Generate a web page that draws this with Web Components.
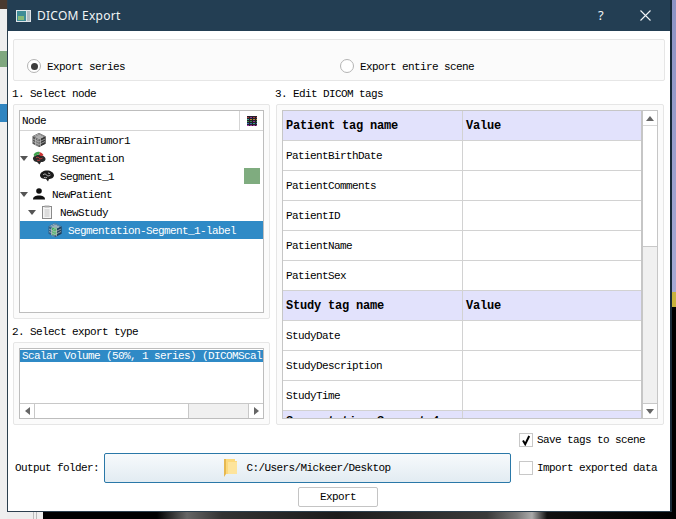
<!DOCTYPE html>
<html>
<head>
<meta charset="utf-8">
<title>DICOM Export</title>
<style>
  html, body { margin: 0; padding: 0; height: 100%; overflow: hidden; background: #000; }
</style>
</head>
<body>
<template id="DesktopBackdropTemplate">
	<style>
		:host { display: block; position: relative; width: 676px; height: 519px; overflow: hidden; background: #000;
			font: 11px "Liberation Mono", "DejaVu Sans Mono", monospace; letter-spacing: -0.6px; color: #000; }
		.left { position: absolute; left: 0; top: 0; width: 7px; height: 519px; background: #efefef; }
		.left i { position: absolute; left: 0; width: 7px; display: block; }
		.right { position: absolute; left: 671px; top: 0; width: 5px; height: 519px;
			background: linear-gradient(#000 0 292px, #c8b23c 292px 307px, #000 307px); }
		.right b { position: absolute; left: 0; top: 0; width: 5px; height: 292px; background: linear-gradient(#8d93c4, #a6a9d4); }
		.bottom { position: absolute; left: 7px; top: 512px; width: 669px; height: 7px;
			background: linear-gradient(90deg, #ededed 0 26px, #bbb 26px 27px, #eee 27px 29px, #bbb 29px 30px, #eee 30px 36px, #000 36px 150px, #444 170px, #666 180px, #333 215px, #1c1c1c 330px, #3a3a3a 480px, #777 510px, #aaa 525px, #111 540px, #000); }
	</style>
	<div class="left">
		<i style="top:0;height:9px;background:#4a3a30"></i>
		<i style="top:51px;height:16px;background:#7fa77f"></i>
		<i style="top:104px;height:18px;background:#2f84c0"></i>
	</div>
	<div class="right"><b></b></div>
	<div class="bottom"></div>
	<slot></slot>
</template>

<template id="DicomWindowTemplate">
	<style>
		:host { display: flex; flex-direction: column; position: absolute; left: 7px; top: 0; width: 662px; height: 511px;
			box-sizing: content-box; border: 1px solid #2c3f4e; border-top: 0; border-right: 2px solid #182a38; background: #fff; }
	</style>
	<slot></slot>
</template>

<template id="TitleBarTemplate">
	<style>
		:host { display: flex; align-items: center; height: 31px; background: #233e53; color: #f2f5f7; flex: none;
			font: 12px "Noto Sans", "Open Sans", sans-serif; letter-spacing: 0.25px; }
		svg { display: block; margin-left: 8px; margin-right: 6px; }
		.text { flex: 1; padding-bottom: 1px; }
		.help { width: 16px; text-align: center; font-size: 13px; margin-right: 31px; padding-bottom: 2px; }
		.close { margin: 0 19px 1px 0; }
	</style>
	<svg width="15" height="12" viewBox="0 0 15 12">
		<rect width="15" height="12" fill="#dfe4e8"/>
		<rect x="1" y="1" width="9" height="10" fill="#3f8c96"/>
		<rect x="2" y="6" width="6" height="4" fill="#86b878"/>
		<rect x="11" y="1" width="3" height="10" fill="#aeb9c0"/>
	</svg>
	<span class="text"><slot></slot></span>
	<span class="help">?</span>
	<svg class="close" width="11" height="11" viewBox="0 0 11 11"><path d="M.5.5l10 10M10.5.5l-10 10" stroke="#f2f5f7" stroke-width="1.1" fill="none"/></svg>
</template>

<template id="GroupBoxTemplate">
	<style>
		:host { display: block; box-sizing: border-box; background: #fbfbfb; border: 1px solid #e6e6e6; border-radius: 2px; padding: 5px; }
	</style>
	<slot></slot>
</template>

<template id="SectionLabelTemplate">
	<style>
		:host { display: flex; align-items: center; height: 23px; flex: none; white-space: pre; margin-left: -1px; padding-top: 2px; box-sizing: border-box; }
	</style>
	<slot></slot>
</template>

<template id="RadioOptionTemplate">
	<style>
		:host { display: flex; align-items: center; gap: 6px; height: 14px; white-space: pre; }
		.ring { box-sizing: border-box; width: 14px; height: 14px; border: 1px solid #b4b4b4; border-radius: 50%; background: #fff; display: flex; align-items: center; justify-content: center; }
		:host([checked]) .ring::after { content: ""; width: 7px; height: 7px; border-radius: 50%; background: #3c3c3c; }
		span.t { padding-top: 1px; }
	</style>
	<span class="ring"></span><span class="t"><slot></slot></span>
</template>

<template id="CheckOptionTemplate">
	<style>
		:host { display: flex; align-items: center; gap: 4px; height: 14px; white-space: pre; }
		.box { box-sizing: border-box; width: 14px; height: 14px; border: 1px solid #c8c8c8; background: #fff; display: block; }
		svg { display: none; }
		:host([checked]) svg { display: block; }
	</style>
	<span class="box"><svg width="12" height="12" viewBox="0 0 12 12"><path d="M3 6.500L5.200 10.200 9.200 2" fill="none" stroke="#000" stroke-width="2"/></svg></span><slot></slot>
</template>

<template id="NodeTreeTemplate">
	<style>
		:host { display: flex; flex-direction: column; box-sizing: border-box; height: 203px; border: 1px solid #bdbdbd; background: #fff; }
		.head { display: flex; height: 20px; flex: none; border-bottom: 1px solid #d5d5d5; box-sizing: border-box; }
		.head span { flex: 1; padding: 4px 0 0 2px; }
		.head div { width: 23px; border-left: 1px solid #d5d5d5; display: flex; align-items: center; justify-content: center; }
	</style>
	<div class="head"><span>Node</span><div>
		<svg width="10" height="10" viewBox="0 0 10 10" shape-rendering="crispEdges">
			<rect width="10" height="10" fill="#23202c"/>
			<path d="M0 1h10v1H0z" fill="#a83a3a"/>
			<path d="M0 3h10v1H0z" fill="#b08a3a"/>
			<path d="M0 5h10v1H0z" fill="#3a8a4a"/>
			<path d="M0 7h10v1H0z" fill="#3a6ab0"/>
			<path d="M0 9h10v1H0z" fill="#9c3a9c"/>
			<path d="M2 0h1v10H2zM5 0h1v10H5zM8 0h1v10H8z" fill="#23202c"/>
			<path d="M3 1h2v1H3zM6 5h2v1H6z" fill="#8c3a9c"/>
			<path d="M0 3h2v1H0zM6 7h2v1H6z" fill="#3aa08a"/>
		</svg>
	</div></div>
	<div><slot></slot></div>
</template>

<template id="TreeRowTemplate">
	<style>
		:host { display: flex; align-items: center; height: 18px; white-space: pre; padding-left: calc(var(--level, 0) * 8px); }
		:host([selected]) { background: #2f8ac6; color: #fff; }
		.arrow { width: 8px; flex: none; display: flex; justify-content: center; margin-right: 4px; }
		.arrow i { display: none; width: 0; height: 0; border-left: 4px solid transparent; border-right: 4px solid transparent; border-top: 5px solid #555; }
		:host([open]) .arrow i { display: block; }
		svg { display: block; flex: none; margin-right: 6px; }
		.text { flex: 1; padding-top: 1px; }
		.color { display: none; width: 16px; height: 16px; background: #7fac7f; margin-right: 3px; }
		:host([swatch]) .color { display: block; }
	</style>
	<span class="arrow"><i></i></span><svg width="14" height="14" viewBox="0 0 14 14"></svg><span class="text"><slot></slot></span><span class="color"></span>
</template>

<template id="ArrowButtonTemplate">
	<style>
		:host { display: flex; align-items: center; justify-content: center; flex: none; box-sizing: border-box; width: 14px; height: 14px; background: #fff; }
		i { width: 0; height: 0; display: block; }
		:host([dir=up]) i { border: 4px solid transparent; border-top: 0; border-bottom: 5px solid #666; }
		:host([dir=down]) i { border: 4px solid transparent; border-bottom: 0; border-top: 5px solid #666; }
		:host([dir=left]) i { border: 4px solid transparent; border-left: 0; border-right: 5px solid #666; }
		:host([dir=right]) i { border: 4px solid transparent; border-right: 0; border-left: 5px solid #666; }
	</style>
	<i></i>
</template>

<template id="ExportListTemplate">
	<style>
		:host { display: flex; flex-direction: column; box-sizing: border-box; height: 71px; border: 1px solid #bdbdbd; background: #fff; }
		.items { flex: 1; overflow: hidden; white-space: pre; }
		.item { background: #2f8ac6; color: #fff; height: 12px; line-height: 12px; margin-top: 1px; padding-left: 2px; overflow: hidden; }
		.bar { display: flex; flex: none; height: 14px; border-top: 1px solid #c8c8c8; box-sizing: content-box; }
		.handle { width: 155px; background: #fff; border-left: 1px solid #c8c8c8; }
		.track { width: 60px; background: #f0f0f0; border-left: 1px solid #c8c8c8; border-right: 1px solid #c8c8c8; }
	</style>
	<div class="items"><div class="item"><slot></slot></div></div>
	<div class="bar"><arrow-button dir="left"></arrow-button><div class="handle"></div><div class="track"></div><arrow-button dir="right"></arrow-button></div>
</template>

<template id="TagTableTemplate">
	<style>
		:host { display: flex; box-sizing: border-box; height: 309px; border: 1px solid #c6c6c6; background: #fff; }
		.rows { flex: 1; overflow: hidden; border-right: 2px solid #c6c6c6; }
		.bar { width: 14px; flex: none; display: flex; flex-direction: column; }
		.bar div:nth-of-type(1) { flex: none; height: 120px; background: #fff; border-top: 1px solid #d8d8d8; }
		.bar div:nth-of-type(2) { flex: 1; background: #f0f0f0; border-top: 1px solid #c8c8c8; border-bottom: 1px solid #c8c8c8; }
	</style>
	<div class="rows"><slot></slot></div>
	<div class="bar"><arrow-button dir="up"></arrow-button><div></div><div></div><arrow-button dir="down"></arrow-button></div>
</template>

<template id="TagRowTemplate">
	<style>
		:host { display: grid; grid-template-columns: 179px 1fr; height: 30px; box-sizing: border-box; border-bottom: 1px solid #d2d2d2; white-space: pre; }
		:host([header]) { background: #e2e2fc; font-weight: bold; font-size: 12px; letter-spacing: -0.2px; }
		:host([cut]) { height: 21px; border-bottom: 0; }
		.c { display: flex; align-items: center; padding-left: 3px; }
		.c + .c { border-left: 1px solid #d2d2d2; padding-left: 3px; }
	</style>
	<div class="c"><slot></slot></div><div class="c"><slot name="value"></slot></div>
</template>

<template id="FolderButtonTemplate">
	<style>
		:host { display: flex; align-items: center; justify-content: center; gap: 8px; box-sizing: border-box; height: 30px; white-space: pre;
			border: 1px solid #2a78a8; border-radius: 2px; background: linear-gradient(#f7fafc, #e2ecf2); }
		svg { display: block; }
	</style>
	<svg width="14" height="20" viewBox="0 0 14 20">
		<path d="M0 1h10v15H2l-2 3z" fill="#e6b850"/>
		<path d="M2 1h9v2h2v13H2z" fill="#fcd97c"/>
		<path d="M4 4h9v12H4z" fill="#fde49c"/>
	</svg>
	<span><slot></slot></span>
</template>

<template id="PushButtonTemplate">
	<style>
		:host { display: flex; align-items: center; justify-content: center; box-sizing: border-box; width: 80px; height: 20px;
			border: 1px solid #c4c4c4; border-radius: 2px; background: #fff; }
	</style>
	<slot></slot>
</template>

<script>
	// plain components, markup comes from the template with the same name
	function simple(tag, templateId) {
		customElements.define(tag, class extends HTMLElement {
			constructor() {
				super();
				const clone = document.getElementById(templateId).content.cloneNode(true);
				this.attachShadow({mode: 'open'}).appendChild(clone);
			}
		});
	}

	simple('desktop-backdrop', 'DesktopBackdropTemplate');
	simple('dicom-window', 'DicomWindowTemplate');
	simple('title-bar', 'TitleBarTemplate');
	simple('group-box', 'GroupBoxTemplate');
	simple('section-label', 'SectionLabelTemplate');
	simple('radio-option', 'RadioOptionTemplate');
	simple('check-option', 'CheckOptionTemplate');
	simple('node-tree', 'NodeTreeTemplate');
	simple('arrow-button', 'ArrowButtonTemplate');
	simple('export-list', 'ExportListTemplate');
	simple('tag-table', 'TagTableTemplate');
	simple('tag-row', 'TagRowTemplate');
	simple('folder-button', 'FolderButtonTemplate');
	simple('push-button', 'PushButtonTemplate');

	const cubeLines = '<path d="M3 2.500l5.500 2.800v8M5 1.500l5.500 2.800M7 5.500v8M9 2.500L3.500 5.300v7M11 3.500L5 6.500v7M1 6l6 3 6-3M1 8.500l6 3 6-3" stroke="#c4c4c4" stroke-width=".7" fill="none"/>';
	const ICONS = {
		volume: '<path d="M7 0l6.500 3.200v7.500L7 14 .5 10.700V3.200z" fill="#555"/><path d="M7 6.500l6.500-3.300v7.500L7 14z" fill="#363636"/><path d="M7 0l6.500 3.200L7 6.500.5 3.200z" fill="#8c8c8c"/>' + cubeLines,
		label: '<path d="M7 0l6.500 3.200v7.500L7 14 .5 10.700V3.200z" fill="#2d5f86"/><path d="M7 6.500l6.500-3.300v7.500L7 14z" fill="#1f3f5a"/><path d="M7 0l6.500 3.200L7 6.500.5 3.200z" fill="#5d8cab"/><path d="M4 4.500h5V12H4z" fill="#22b04a"/>' + cubeLines,
		segmentation: '<path d="M1 8C.5 5.500 4 3.500 7 4c3.500 0 7 2 6.500 4.500-.5 2-2.500 2.500-4.500 2.500l-1.500 2.500L5 11C3 11 1.500 10 1 8z" fill="#2a2a2a"/><path d="M1.500 4C3 1 6 .2 8 1.200L7 4C5.500 3.600 4 4 3 5.500z" fill="#3fa34d"/><path d="M8 1.200c1.800.5 3 1.500 3.500 3L9 5.200C8.500 4.500 7.800 4.200 7 4z" fill="#cc3333"/><path d="M4 7c1-1 2-1 3 0s2 1 3.500 0M5 9c1 .5 2 .5 3 0" stroke="#d44" stroke-width=".9" fill="none"/>',
		segment: '<path d="M0 6.500C0 3.500 3.500 1.500 7 1.500c3.500 0 7 2 7 5-.2 2.500-3 3.500-5 3.500L8 12.500 6 10C3 10 .2 9 0 6.500z" fill="#1c1c1c"/><path d="M3 6c1-1.300 2.500-1.300 3.500 0s2.500 1 4 0M4 8.500c1 .4 2 .4 3 0M8 4c.8 0 1.500.3 2 .8" stroke="#ddd" stroke-width=".8" fill="none"/>',
		patient: '<circle cx="7" cy="4" r="2.800" fill="#111"/><path d="M1 12.500c0-3 2.500-4 6-4s6 1 6 4z" fill="#111"/>',
		study: '<rect x="2.500" y="1.500" width="9" height="12" fill="#f4f4f4" stroke="#8a8a8a"/><rect x="4.500" y=".5" width="5" height="2" fill="#a8a8a8"/><path d="M4.500 5h5M4.500 7h5M4.500 9h5M4.500 11h5" stroke="#c4c4c4" fill="none"/>'
	};

	class TreeRow extends HTMLElement {
		constructor() {
			super();
			const clone = document.getElementById('TreeRowTemplate').content.cloneNode(true);
			this.attachShadow({mode: 'open'}).appendChild(clone);
		}

		connectedCallback() {
			this.style.setProperty('--level', this.getAttribute('level') || 0);
			this.shadowRoot.querySelector('svg').innerHTML = ICONS[this.getAttribute('icon')];
		}
	}
	customElements.define('tree-row', TreeRow);

	class DicomExportForm extends HTMLElement {
		constructor() {
			super();
			this.attachShadow({mode: 'open'}).innerHTML = `
				<style>
					:host { display: flex; flex-direction: column; flex: 1; padding: 8px 5px 0 5px; }
					.mode { flex: none; height: 42px; padding: 19px 0 0 13px; display: grid; grid-template-columns: 313px 1fr; }
					.main { display: grid; grid-template-columns: 257px 388px; gap: 6px; flex: none; }
					.col { display: flex; flex-direction: column; }
					.tree-box { height: 215px; }
					.list-box { height: 83px; }
					.tags-box { height: 321px; }
					.foot { display: grid; grid-template-columns: 91px 407px 1fr; column-gap: 0; flex: none; }
					.save { grid-column: 3; margin: 8px 0 0 8px; }
					.out { grid-column: 1; grid-row: 2; display: flex; align-items: center; padding-left: 2px; margin-top: 6px; white-space: pre; }
					.folder { grid-column: 2; grid-row: 2; margin-top: 6px; }
					.import { grid-column: 3; grid-row: 2; margin: 14px 0 0 8px; }
					.go { grid-column: 1 / 4; grid-row: 3; margin-top: 4px; display: flex; padding-left: 285px; }
				</style>
				<group-box class="mode">
					<radio-option checked>Export series</radio-option>
					<radio-option>Export entire scene</radio-option>
				</group-box>
				<div class="main">
					<div class="col">
						<section-label>1. Select node</section-label>
						<group-box class="tree-box">
							<node-tree>
								<tree-row icon="volume">MRBrainTumor1</tree-row>
								<tree-row icon="segmentation" open>Segmentation</tree-row>
								<tree-row icon="segment" level="1" swatch>Segment_1</tree-row>
								<tree-row icon="patient" open>NewPatient</tree-row>
								<tree-row icon="study" level="1" open>NewStudy</tree-row>
								<tree-row icon="label" level="2" selected>Segmentation-Segment_1-label</tree-row>
							</node-tree>
						</group-box>
						<section-label>2. Select export type</section-label>
						<group-box class="list-box">
							<export-list>Scalar Volume (50%, 1 series) (DICOMScal</export-list>
						</group-box>
					</div>
					<div class="col">
						<section-label>3. Edit DICOM tags</section-label>
						<group-box class="tags-box">
							<tag-table>
								<tag-row header>Patient tag name<span slot="value">Value</span></tag-row>
								<tag-row>PatientBirthDate</tag-row>
								<tag-row>PatientComments</tag-row>
								<tag-row>PatientID</tag-row>
								<tag-row>PatientName</tag-row>
								<tag-row>PatientSex</tag-row>
								<tag-row header>Study tag name<span slot="value">Value</span></tag-row>
								<tag-row>StudyDate</tag-row>
								<tag-row>StudyDescription</tag-row>
								<tag-row>StudyTime</tag-row>
								<tag-row header cut>Segmentation-Segment_1</tag-row>
							</tag-table>
						</group-box>
					</div>
				</div>
				<div class="foot">
					<check-option class="save" checked>Save tags to scene</check-option>
					<div class="out">Output folder:</div>
					<folder-button class="folder">C:/Users/Mickeer/Desktop</folder-button>
					<check-option class="import">Import exported data</check-option>
					<div class="go"><push-button>Export</push-button></div>
				</div>`;
		}
	}
	customElements.define('dicom-export-form', DicomExportForm);
</script>
<desktop-backdrop>
	<dicom-window>
		<title-bar>DICOM Export</title-bar>
		<dicom-export-form></dicom-export-form>
	</dicom-window>
</desktop-backdrop>
</body>
</html>
